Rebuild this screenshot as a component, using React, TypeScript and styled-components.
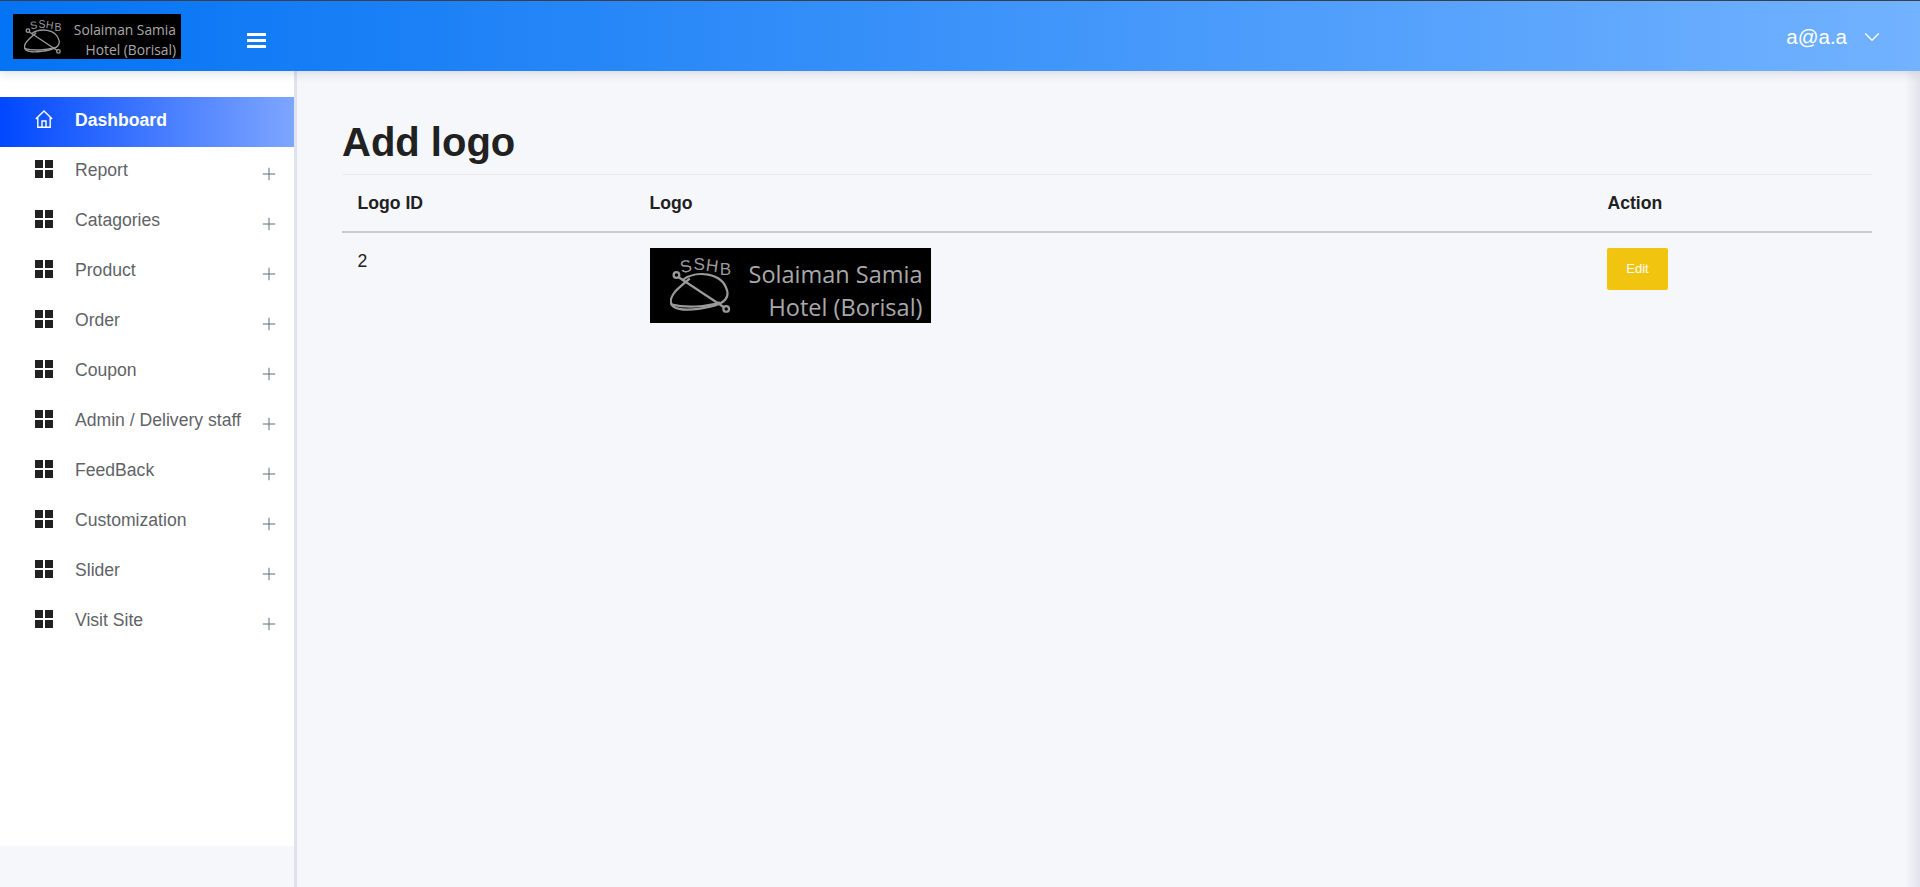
import React from 'react';
import styled, { createGlobalStyle } from 'styled-components';
import { ChevronDown, Plus } from 'lucide-react';

const GlobalStyle = createGlobalStyle`
  html, body {
    margin: 0;
    padding: 0;
    height: 100%;
    overflow: hidden;
    background: #f5f7fb;
    font-family: "Liberation Sans", Arial, sans-serif;
    color: #212121;
  }
  * { box-sizing: border-box; }
`;

const Page = styled.div`
  height: 887px;
  display: flex;
  flex-direction: column;
  position: relative;

  &::after {
    content: '';
    position: absolute;
    top: 0;
    right: 0;
    bottom: 0;
    width: 15px;
    pointer-events: none;
    background: linear-gradient(to right, rgba(120, 125, 150, 0), rgba(120, 125, 150, 0.16));
  }
`;

const Header = styled.header`
  height: 71px;
  flex: none;
  display: flex;
  align-items: center;
  padding: 1px 35px 0 13px;
  border-top: 1px solid #3a4048;
  background: linear-gradient(to right, #0473f4, #72b2ff);
  box-shadow: 0 2px 10px rgba(60, 70, 90, 0.18);
  position: relative;
  z-index: 2;
`;

const Brand = styled.div`
  width: 168px;
  height: 45px;
  flex: none;
  background: #000;
  display: flex;
  align-items: center;
  padding: 0 5px 0 11px;
  gap: 6px;
`;

const BrandText = styled.div<{ $size: number; $drop: number }>`
  flex: 1;
  text-align: right;
  font-family: "Open Sans", sans-serif;
  font-size: ${p => p.$size}px;
  line-height: 1.39;
  padding-top: ${p => p.$drop}px;
  color: #a9a9a9;
  white-space: nowrap;
`;

const MenuButton = styled.button`
  margin-left: 63px;
  margin-top: 7px;
  width: 24px;
  height: 24px;
  padding: 0;
  border: 0;
  background: none;
  color: #fff;
  display: flex;
  align-items: center;
  justify-content: center;
`;

const UserMenu = styled.div`
  margin-left: auto;
  display: flex;
  align-items: center;
  gap: 12px;
  color: #fff;
  font-size: 20.5px;
`;

const Body = styled.div`
  flex: 1;
  display: flex;
  min-height: 0;
`;

const SideColumn = styled.aside`
  width: 297px;
  flex: none;
  border-right: 3px solid #e0e2ec;
`;

const SideNav = styled.nav`
  height: 775px;
  background: #fff;
  padding-top: 26px;
`;

const NavRow = styled.a<{ $active?: boolean }>`
  height: 50px;
  display: flex;
  align-items: center;
  padding: 0 0 3px 35px;
  font-size: 17.6px;
  color: ${p => (p.$active ? '#fff' : '#5f6368')};
  font-weight: ${p => (p.$active ? 700 : 400)};
  background: ${p => (p.$active ? 'linear-gradient(to right, #0048ff, #7ea6ff)' : 'none')};
`;

const NavIcon = styled.span`
  width: 18px;
  height: 18px;
  flex: none;
  margin: 0 22px 3px 0;
  display: flex;
  align-items: center;
  justify-content: center;
`;

const NavLabel = styled.span`
  flex: 1;
  white-space: nowrap;
`;

const NavPlus = styled.span`
  width: 20px;
  height: 20px;
  margin: 7px 15px 0 0;
  color: #5f6e7c;
  display: flex;
`;

const Content = styled.main`
  flex: 1;
  padding: 48px 48px 0 45px;
`;

const Title = styled.h1`
  margin: 0;
  font-size: 40px;
  line-height: 46px;
  font-weight: 700;
  color: #212121;
`;

const Table = styled.table`
  width: 100%;
  margin-top: 9px;
  border-collapse: collapse;
  table-layout: fixed;
  font-size: 17.6px;
`;

const HeadCell = styled.th`
  height: 57px;
  padding: 2px 16px 0 15.5px;
  text-align: left;
  font-weight: 700;
  color: #212121;
  border-top: 1px solid #e9ebef;
  border-bottom: 2px solid #c9cbcf;
`;

const Cell = styled.td`
  padding: 15px 16px 16px 15.5px;
  vertical-align: top;
  line-height: 26px;
`;

const RowLogo = styled(Brand)`
  width: 281px;
  height: 75px;
  padding: 0 8px 0 20px;
  gap: 10px;
`;

const EditButton = styled.button`
  display: block;
  width: 61px;
  height: 42px;
  margin-left: -0.5px;
  border: 0;
  border-radius: 2px;
  background: #f1c40f;
  color: #fff;
  font-family: inherit;
  font-size: 13px;
  padding: 0;
`;

const EmblemLetter = styled.text`
  font-family: "Liberation Sans", Arial, sans-serif;
  font-size: 54px;
  fill: #9a9a9a;
`;

const Emblem: React.FC<{ width: number }> = ({ width }) => (
  <svg width={width} height={width * 0.92} viewBox="145 85 195 180" fill="none" stroke="#9a9a9a" strokeWidth="7" strokeLinecap="round" style={{ flex: 'none' }}>
    <EmblemLetter x="176" y="136" stroke="none" transform="rotate(-12 195 115)">S</EmblemLetter>
    <EmblemLetter x="219" y="130" stroke="none">S</EmblemLetter>
    <EmblemLetter x="258" y="134" stroke="none" transform="rotate(8 280 115)">H</EmblemLetter>
    <EmblemLetter x="302" y="146" stroke="none">B</EmblemLetter>
    <circle cx="165" cy="145" r="9" />
    <circle cx="322" cy="252" r="9" />
    <path d="M172 152 L314 246" />
    <path d="M185 160 C225 130 310 135 325 195 C335 235 280 245 235 252 C190 258 145 255 147 225 C150 200 180 180 205 158" />
    <path d="M150 238 C195 250 260 245 300 232" />
  </svg>
);

const BarsIcon = () => (
  <svg width="19" height="15" viewBox="0 0 19 15" fill="currentColor">
    <rect x="0" y="0" width="19" height="3" rx="0.5" />
    <rect x="0" y="6" width="19" height="3" rx="0.5" />
    <rect x="0" y="12" width="19" height="3" rx="0.5" />
  </svg>
);

const HomeIcon = () => (
  <svg width="18" height="18" viewBox="0 0 18 18" fill="none" stroke="#fff" strokeWidth="1.4">
    <path d="M0.8 9 L9 1 L17.2 9" />
    <path d="M2.8 7.5 V17.2 H15.2 V7.5" />
    <path d="M7 17.2 V11 H11 V17.2" />
  </svg>
);

const GridIcon = () => (
  <svg width="18" height="18" viewBox="0 0 18 18" fill="#212121">
    <rect x="0" y="0" width="8" height="8" />
    <rect x="10" y="0" width="8" height="8" />
    <rect x="0" y="10" width="8" height="8" />
    <rect x="10" y="10" width="8" height="8" />
  </svg>
);

const navItems = ['Report', 'Catagories', 'Product', 'Order', 'Coupon', 'Admin / Delivery staff', 'FeedBack', 'Customization', 'Slider', 'Visit Site'];

const App: React.FC = () => (
  <Page>
    <GlobalStyle />
    <Header>
      <Brand>
        <Emblem width={38} />
        <BrandText $size={13.8} $drop={6}>Solaiman Samia<br />Hotel (Borisal)</BrandText>
      </Brand>
      <MenuButton><BarsIcon /></MenuButton>
      <UserMenu>
        a@a.a
        <ChevronDown size={26} strokeWidth={1.2} />
      </UserMenu>
    </Header>
    <Body>
      <SideColumn>
        <SideNav>
          <NavRow $active>
            <NavIcon><HomeIcon /></NavIcon>
            <NavLabel>Dashboard</NavLabel>
          </NavRow>
          {navItems.map(item => (
            <NavRow key={item}>
              <NavIcon><GridIcon /></NavIcon>
              <NavLabel>{item}</NavLabel>
              <NavPlus><Plus size={20} strokeWidth={1.2} /></NavPlus>
            </NavRow>
          ))}
        </SideNav>
      </SideColumn>
      <Content>
        <Title>Add logo</Title>
        <Table>
          <colgroup>
            <col style={{ width: 292 }} />
            <col style={{ width: 958 }} />
            <col />
          </colgroup>
          <thead>
            <tr>
              <HeadCell>Logo ID</HeadCell>
              <HeadCell>Logo</HeadCell>
              <HeadCell>Action</HeadCell>
            </tr>
          </thead>
          <tbody>
            <tr>
              <Cell>2</Cell>
              <Cell>
                <RowLogo>
                  <Emblem width={62} />
                  <BrandText $size={23.5} $drop={12}>Solaiman Samia<br />Hotel (Borisal)</BrandText>
                </RowLogo>
              </Cell>
              <Cell><EditButton>Edit</EditButton></Cell>
            </tr>
          </tbody>
        </Table>
      </Content>
    </Body>
  </Page>
);

export default App;
